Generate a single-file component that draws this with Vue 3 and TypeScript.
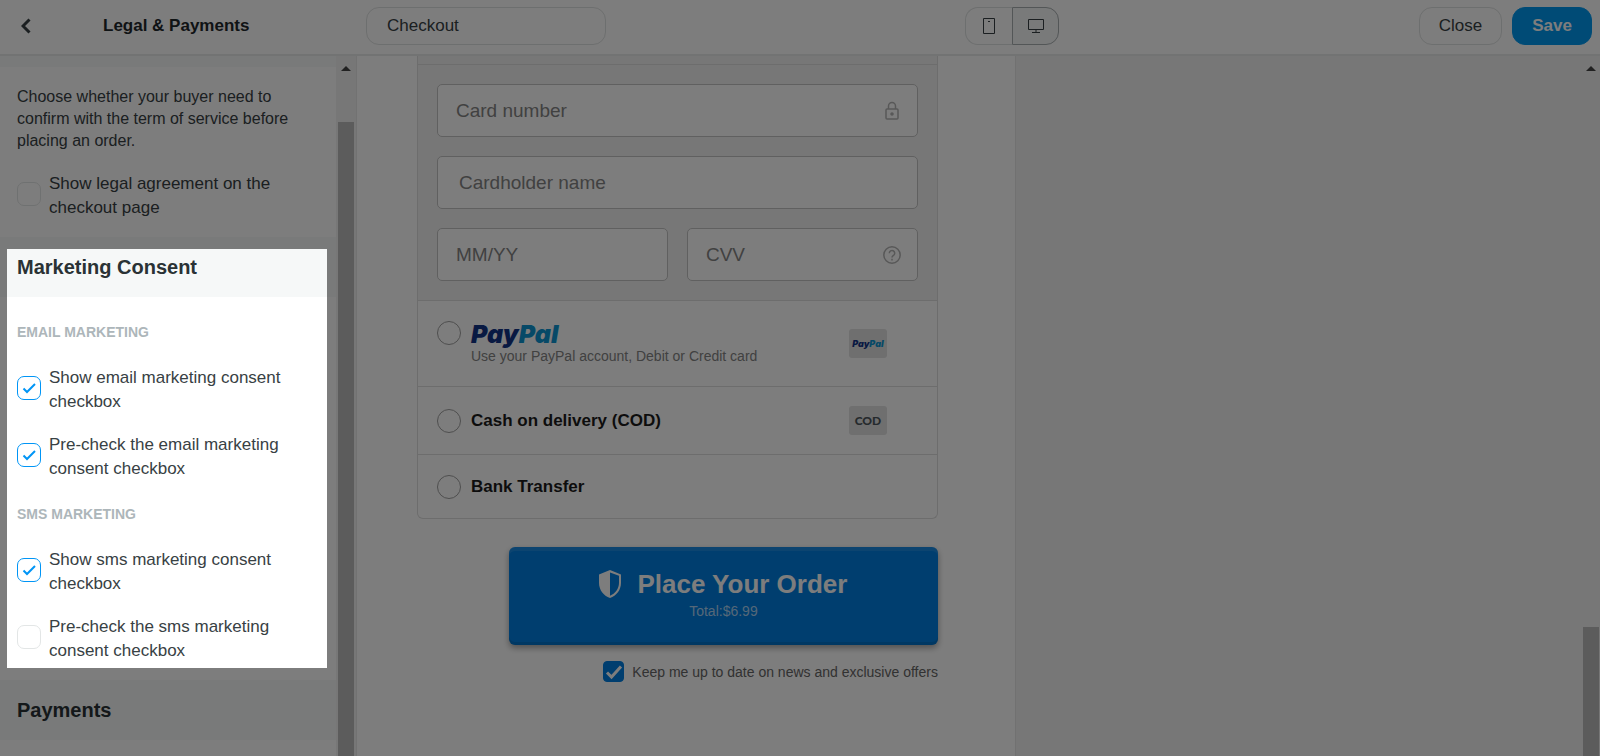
<script setup lang="ts">
import { ref } from 'vue'

interface Option {
  id: string
  label: string
  checked: boolean
}

const pageName = ref('Checkout')
const device = ref<'mobile' | 'desktop'>('desktop')
const method = ref('')
const newsletter = ref(true)

const legal = ref<Option>({
  id: 'legal',
  label: 'Show legal agreement on the checkout page',
  checked: false,
})

const groups = ref<{ title: string; options: Option[] }[]>([
  {
    title: 'EMAIL MARKETING',
    options: [
      { id: 'email-show', label: 'Show email marketing consent checkbox', checked: true },
      { id: 'email-pre', label: 'Pre-check the email marketing consent checkbox', checked: true },
    ],
  },
  {
    title: 'SMS MARKETING',
    options: [
      { id: 'sms-show', label: 'Show sms marketing consent checkbox', checked: true },
      { id: 'sms-pre', label: 'Pre-check the sms marketing consent checkbox', checked: false },
    ],
  },
])
</script>

<template>
  <div class="app">
    <header class="topbar">
      <div class="topbar-left">
        <button class="back" type="button" aria-label="Back">
          <svg viewBox="0 0 10 16" width="10" height="16"><path d="M8.5 1.5 2 8l6.5 6.5" /></svg>
        </button>
        <h1>Legal &amp; Payments</h1>
      </div>
      <div class="topbar-main">
        <input v-model="pageName" class="page-name" type="text" aria-label="Page name" />
        <div class="devices">
          <button
            type="button"
            class="device"
            :class="{ active: device === 'mobile' }"
            aria-label="Mobile"
            @click="device = 'mobile'"
          >
            <svg viewBox="0 0 12 16" width="12" height="16">
              <path d="M.5.5h11v15H.5zM5 3.5h2" />
            </svg>
          </button>
          <button
            type="button"
            class="device"
            :class="{ active: device === 'desktop' }"
            aria-label="Desktop"
            @click="device = 'desktop'"
          >
            <svg viewBox="0 0 16 16" width="16" height="16">
              <path d="M.5 1.500h15v10H.5zM8 11.500v3M4 14.500h8" />
            </svg>
          </button>
        </div>
        <div class="actions">
          <button type="button" class="btn">Close</button>
          <button type="button" class="btn primary">Save</button>
        </div>
      </div>
    </header>

    <div class="workspace">
      <aside class="sidebar">
        <div class="panel">
          <section class="block first">
            <p>Choose whether your buyer need to confirm with the term of service before placing an order.</p>
            <label class="option" :for="legal.id">
              <span class="tick">
                <input :id="legal.id" v-model="legal.checked" type="checkbox" />
                <svg v-if="legal.checked" viewBox="0 0 24 24"><path d="M6.5 12.5 10 16l8-8" /></svg>
              </span>
              <span>{{ legal.label }}</span>
            </label>
          </section>

          <section class="marketing">
            <h2>Marketing Consent</h2>
            <div class="block groups">
              <fieldset v-for="g in groups" :key="g.title">
                <legend>{{ g.title }}</legend>
                <label v-for="o in g.options" :key="o.id" class="option" :for="o.id">
                  <span class="tick">
                    <input :id="o.id" v-model="o.checked" type="checkbox" />
                    <svg v-if="o.checked" viewBox="0 0 24 24"><path d="M6.5 12.5 10 16l8-8" /></svg>
                  </span>
                  <span>{{ o.label }}</span>
                </label>
              </fieldset>
            </div>
            <div class="spotlight" aria-hidden="true"></div>
          </section>

          <section>
            <h2>Payments</h2>
            <div class="block"></div>
          </section>
        </div>
        <div class="scrollbar" aria-hidden="true">
          <svg viewBox="0 0 10 5" width="10" height="5"><path d="M5 0l5 5H0z" /></svg>
          <div class="thumb"></div>
        </div>
      </aside>

      <main class="preview">
        <div class="page">
          <form class="checkout" @submit.prevent>
            <div class="methods">
              <div class="method-head"></div>
              <div class="card-form">
                <div class="field">
                  <input type="text" placeholder="Card number" aria-label="Card number" />
                  <svg viewBox="0 0 20 20" width="20" height="20">
                    <rect x="4" y="8" width="12" height="10" rx="1" />
                    <path d="M6.5 8V5a3.5 3.5 0 0 1 7 0v3" />
                    <circle class="dot" cx="10" cy="13" r="1.8" />
                  </svg>
                </div>
                <div class="field name">
                  <input type="text" placeholder="Cardholder name" aria-label="Cardholder name" />
                </div>
                <div class="pair">
                  <div class="field">
                    <input type="text" placeholder="MM/YY" aria-label="Expiry date" />
                  </div>
                  <div class="field">
                    <input type="text" placeholder="CVV" aria-label="CVV" />
                    <svg viewBox="0 0 20 20" width="20" height="20">
                      <circle cx="10" cy="10" r="8.2" />
                      <path d="M7.3 8.2a2.7 2.7 0 1 1 4.2 2.2c-1 .7-1.5 1.1-1.5 2.2M10 13.8v1.6" />
                    </svg>
                  </div>
                </div>
              </div>
              <label class="method paypal" for="m-paypal">
                <input id="m-paypal" v-model="method" type="radio" name="method" value="paypal" />
                <span class="method-text">
                  <span class="wordmark">Pay<i>Pal</i></span>
                  <small>Use your PayPal account, Debit or Credit card</small>
                </span>
                <span class="badge wordmark">Pay<i>Pal</i></span>
              </label>
              <label class="method cod" for="m-cod">
                <input id="m-cod" v-model="method" type="radio" name="method" value="cod" />
                <span class="method-text">Cash on delivery (COD)</span>
                <span class="badge">COD</span>
              </label>
              <label class="method bank" for="m-bank">
                <input id="m-bank" v-model="method" type="radio" name="method" value="bank" />
                <span class="method-text">Bank Transfer</span>
              </label>
            </div>

            <button class="order" type="submit">
              <span class="order-title">
                <svg viewBox="0 0 22 28" width="22" height="28">
                  <path
                    fill-rule="evenodd"
                    d="M11 0l11 4.6v8.2C22 20 17.5 25.8 11 28 4.5 25.8 0 20 0 12.8V4.6zM11 2.6v23.2c5.2-2.2 9-7 9-13V5.8z"
                  />
                </svg>
                Place Your Order
              </span>
              <span class="order-total">Total:$6.99</span>
            </button>

            <label class="newsletter" for="newsletter">
              <span class="tick solid">
                <input id="newsletter" v-model="newsletter" type="checkbox" />
                <svg v-if="newsletter" viewBox="0 0 21 21"><path d="M4 11.5 8.5 16 18 5.5" /></svg>
              </span>
              <span>Keep me up to date on news and exclusive offers</span>
            </label>
          </form>
        </div>
        <div class="backdrop"></div>
        <div class="scrollbar outer" aria-hidden="true">
          <svg viewBox="0 0 10 5" width="10" height="5"><path d="M5 0l5 5H0z" /></svg>
          <div class="thumb"></div>
        </div>
      </main>
    </div>
  </div>
</template>

<style>
body {
  margin: 0;
}
</style>

<style scoped>
* {
  box-sizing: border-box;
}
.app {
  display: flex;
  flex-direction: column;
  height: 100vh;
  overflow: hidden;
  font-family: 'Liberation Sans', Arial, sans-serif;
  font-size: 17px;
  color: #384144;
  background: #fff;
}
button,
input {
  font: inherit;
  color: inherit;
  margin: 0;
}
svg {
  fill: none;
  stroke: currentColor;
}

.topbar {
  display: flex;
  flex: none;
  height: 56px;
  padding: 2px 0 4px;
  border-bottom: 2px solid #e9ebeb;
}
.topbar-left {
  display: flex;
  flex: none;
  align-items: center;
  width: 366px;
  padding-left: 14px;
}
.back {
  display: grid;
  place-items: center;
  width: 24px;
  height: 32px;
  padding: 0;
  border: 0;
  background: none;
}
.back svg {
  stroke-width: 3;
}
h1 {
  margin: 0 0 0 65px;
  font-size: 17px;
  color: #1f282b;
}
.topbar-main {
  display: flex;
  flex: 1;
  align-items: center;
  justify-content: space-between;
  padding-right: 8px;
}
.page-name {
  width: 240px;
  height: 38px;
  padding: 0 20px;
  border: 1px solid #dfe2e2;
  border-radius: 13px;
  background: #fff;
}
.devices {
  display: flex;
}
.device {
  display: grid;
  place-items: center;
  width: 47px;
  height: 38px;
  padding: 0;
  border: 1px solid #dfe2e2;
  background: #fff;
}
.device:first-child {
  border-right: 0;
  border-radius: 13px 0 0 13px;
}
.device:last-child {
  border-radius: 0 13px 13px 0;
}
.device.active {
  border: 1px solid #a9b0b2;
  background: #f7f8f8;
}
.actions {
  display: flex;
  gap: 10px;
}
.btn {
  height: 38px;
  padding: 0 19px;
  border: 1px solid #dfe2e2;
  border-radius: 13px;
  background: #fff;
}
.btn.primary {
  border-color: #0099f0;
  background: #0099f0;
  color: #fff;
  font-weight: bold;
}

.workspace {
  display: flex;
  flex: 1;
  min-height: 0;
}
.sidebar {
  display: flex;
  flex: none;
  width: 357px;
  border-right: 1px solid #e8e8e8;
}
.panel {
  flex: 1;
  padding-top: 11px;
  background: #f6f8f8;
}
.block {
  padding: 20px 16px 17px 17px;
  background: #fff;
  min-height: 40px;
}
.block p {
  margin: 0 0 20px;
  padding-right: 10px;
  font-size: 16px;
  line-height: 22px;
}
.first {
  padding-top: 19px;
}
h2 {
  margin: 0;
  padding-left: 17px;
  font-size: 20px;
  line-height: 60px;
  color: #2a3235;
}
.marketing {
  position: relative;
}
.spotlight {
  position: absolute;
  z-index: 10;
  inset: 12px 9px 12px 7px;
  box-shadow: 0 0 0 9999px rgba(0, 0, 0, 0.51);
  pointer-events: none;
}
.groups {
  display: flex;
  flex-direction: column;
  gap: 23px;
  padding-top: 25px;
}
fieldset {
  display: flex;
  flex-direction: column;
  gap: 19px;
  min-width: 0;
  margin: 0;
  padding: 0;
  border: 0;
}
legend {
  padding: 0 0 24px;
  font-size: 14px;
  font-weight: bold;
  line-height: 20px;
  color: #adb6ba;
}
.option {
  display: flex;
  align-items: center;
  gap: 8px;
  padding-right: 20px;
  line-height: 24px;
}
.option .tick {
  margin-bottom: 4px;
}
.tick {
  display: grid;
  flex: none;
  width: 24px;
  height: 24px;
  color: #0095f6;
}
.tick > * {
  grid-area: 1 / 1;
  width: 100%;
  height: 100%;
}
.tick input {
  appearance: none;
  border: 1px solid #e3e6e6;
  border-radius: 7px;
  background: #fff;
}
.tick input:checked {
  border-color: #0095f6;
}
.tick svg {
  stroke-width: 2;
  pointer-events: none;
}

.scrollbar {
  display: flex;
  flex: none;
  flex-direction: column;
  align-items: center;
  gap: 51px;
  width: 20px;
  padding-top: 10px;
  background: #f3f3f3;
}
.scrollbar svg {
  flex: none;
  fill: #444;
  stroke: none;
}
.thumb {
  flex: 1;
  width: 16px;
  background: #bcbcbc;
}

.preview {
  display: flex;
  flex: 1;
  min-width: 0;
  background: #f3f3f3;
}
.page {
  flex: 659 1 0;
  min-width: 0;
}
.backdrop {
  flex: 567 1 0;
  border-left: 1px solid #e6e6e6;
}
.checkout {
  display: flex;
  flex-direction: column;
  align-items: flex-end;
  height: 100%;
  padding: 0 77px 0 60px;
  background: #fff;
}
.outer {
  gap: 556px;
  width: 18px;
}
.methods {
  width: 100%;
  border: 1px solid #dedede;
  border-top: 0;
  border-radius: 0 0 6px 6px;
}
.method-head {
  height: 9px;
  border-bottom: 1px solid #dedede;
  background: #f3f3f3;
}
.card-form {
  display: flex;
  flex-direction: column;
  gap: 19px;
  padding: 19px;
  background: #f3f3f3;
}
.pair {
  display: grid;
  grid-template-columns: 1fr 1fr;
  gap: 19px;
}
.field {
  display: flex;
  align-items: center;
  min-width: 0;
  height: 53px;
  padding: 0 15px 0 18px;
  border: 1px solid #c4c4c4;
  border-radius: 5px;
  background: #fff;
  color: #b4b4b4;
}
.field.name {
  padding-left: 21px;
}
.field input {
  flex: 1;
  min-width: 0;
  padding: 0;
  border: 0;
  outline: 0;
  background: none;
  font-size: 19px;
  color: #444;
}
.field input::placeholder {
  color: #858585;
  opacity: 1;
}
.field svg {
  flex: none;
  stroke-width: 1.5;
}
.field .dot {
  fill: currentColor;
  stroke: none;
}
.method {
  display: flex;
  align-items: center;
  height: 68px;
  padding: 0 50px 0 19px;
  border-top: 1px solid #dedede;
  color: #1c1c1c;
  font-weight: bold;
}
.method input {
  appearance: none;
  flex: none;
  width: 24px;
  height: 24px;
  margin-right: 10px;
  border: 1px solid #a0a0a0;
  border-radius: 50%;
}
.method input:checked {
  border: 7px solid #007fe2;
}
.method.paypal {
  height: 86px;
}
.paypal input {
  margin-bottom: 22px;
}
.method.bank {
  height: 64px;
}
.method-text {
  flex: 1;
}
.wordmark {
  display: block;
  font-family: Inter, sans-serif;
  font-size: 25px;
  font-style: italic;
  font-weight: 900;
  line-height: 24px;
  color: #123487;
}
.wordmark i {
  color: #0d96d2;
}
small {
  display: block;
  font-size: 14px;
  font-weight: normal;
  line-height: 20px;
  color: #858585;
}
.badge {
  display: grid;
  grid-auto-flow: column;
  place-content: center;
  flex: none;
  width: 38px;
  height: 29px;
  border-radius: 3px;
  background: #e2e2e2;
  font-family: Lato, sans-serif;
  font-size: 12px;
  font-weight: 900;
  color: #4d565c;
}
.badge.wordmark {
  font-family: Inter, sans-serif;
  font-size: 9px;
  color: #123487;
}

.order {
  display: flex;
  flex-direction: column;
  align-items: center;
  width: 429px;
  max-width: 100%;
  height: 98px;
  margin-top: 28px;
  padding: 20px 0 0;
  border: 0;
  border-radius: 6px;
  background: #007fe2;
  box-shadow:
    inset 0 4px 0 rgba(255, 255, 255, 0.1),
    inset 0 -3px 0 rgba(0, 0, 0, 0.1),
    0 3px 6px rgba(0, 0, 0, 0.35);
  color: #fff;
}
.order-title {
  display: flex;
  align-items: center;
  gap: 16px;
  font-size: 26px;
  font-weight: bold;
  line-height: 34px;
}
.order-title svg {
  fill: currentColor;
  stroke: none;
}
.order-total {
  font-size: 14px;
  line-height: 20px;
  color: #aed4f5;
}
.newsletter {
  display: flex;
  align-items: center;
  gap: 8px;
  margin-top: 16px;
  font-size: 14px;
  color: #666;
}
.tick.solid {
  width: 21px;
  height: 21px;
  color: #fff;
}
.tick.solid input {
  border-radius: 4px;
}
.tick.solid input:checked {
  border-color: #007fe2;
  background: #007fe2;
}
.tick.solid svg {
  stroke-width: 3;
}
</style>
